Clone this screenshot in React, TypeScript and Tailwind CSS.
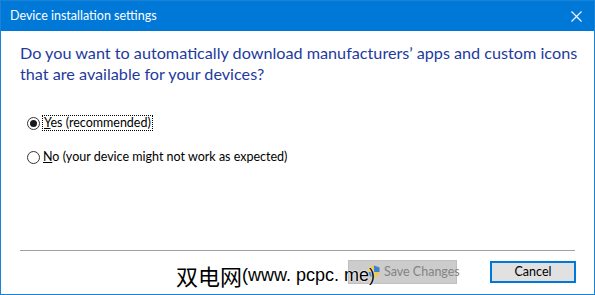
import React from "react";

const ui = { fontFamily: 'Lato, "Noto Sans", sans-serif' };

function Shield() {
  return (
    <svg width="12" height="14" viewBox="0 0 12 14" className="shrink-0">
      <path d="M6 0.5 L11.5 2.5 V7 C11.5 10 9 12.5 6 13.5 C3 12.5 0.5 10 0.5 7 V2.5 Z" fill="#f2c94c" />
      <path d="M6 0.5 L11.5 2.5 V7 H6 Z" fill="#3b82d6" />
      <path d="M6 7 H0.5 C0.5 10 3 12.5 6 13.5 Z" fill="#3b82d6" />
    </svg>
  );
}

function Radio({ checked }: { checked?: boolean }) {
  return (
    <span className="flex h-[13px] w-[13px] shrink-0 items-center justify-center rounded-full border border-[#333333] bg-white">
      {checked && <span className="h-[7px] w-[7px] rounded-full bg-[#1a1a1a]" />}
    </span>
  );
}

export default function App() {
  return (
    <div
      className="relative flex h-[295px] w-[595px] flex-col overflow-hidden border border-[#1883d7] bg-white"
      style={ui}
    >
      <div className="flex h-[30px] shrink-0 items-center justify-between bg-[#0078d7] pl-[9px] pr-[12px] text-white">
        <span className="text-[12.5px]">Device installation settings</span>
        <svg width="11" height="11" viewBox="0 0 11 11">
          <path d="M0.5 0.5 L10.5 10.5 M10.5 0.5 L0.5 10.5" stroke="white" strokeWidth="1.1" />
        </svg>
      </div>

      <div className="flex flex-1 flex-col px-[19px] pt-[11px]">
        <p className="whitespace-nowrap text-[16.2px] leading-[21px] text-[#1e3a9e]">
          Do you want to automatically download manufacturers’ apps and custom icons
          <br />
          that are available for your devices?
        </p>

        <div className="mt-[31px] flex flex-col gap-[19px] pl-[7px] text-[12.5px] text-black">
          <label className="flex items-center gap-[2px]">
            <Radio checked />
            <span className="border border-dotted border-black px-[1px] leading-[14px]">
              <u>Y</u>es (recommended)
            </span>
          </label>
          <label className="flex items-center gap-[3px]">
            <Radio />
            <span className="leading-[14px]">
              <u>N</u>o (your device might not work as expected)
            </span>
          </label>
        </div>

        <div className="mt-auto border-t border-[#a0a0a0]" />
        <div className="flex h-[43px] items-center justify-end gap-[33px] pb-[1px]">
          <button className="flex h-[24px] w-[109px] items-center gap-[4px] whitespace-nowrap border border-[#bfbfbf] bg-[#cccccc] pl-[19px] text-[12.5px] text-[#838383]">
            <Shield />
            Save Changes
          </button>
          <button className="mr-[-1px] h-[22px] w-[86px] whitespace-nowrap border-2 border-[#0078d7] bg-[#e1e1e1] text-[12.5px] text-black">
            Cancel
          </button>
        </div>
      </div>

      <div
        className="absolute left-[175px] top-[261px] flex items-center whitespace-nowrap text-black"
        style={{ textShadow: "0 0 2px white, 0 0 1px white, 0 0 1px white" }}
      >
        <span className="text-[22px] leading-[26px]" style={{ fontFamily: '"Noto Sans CJK SC", sans-serif' }}>
          双电网
        </span>
        <span className="text-[18px] leading-[26px]" style={{ fontFamily: '"Liberation Sans", sans-serif' }}>
          (www. pcpc. me)
        </span>
      </div>
    </div>
  );
}
